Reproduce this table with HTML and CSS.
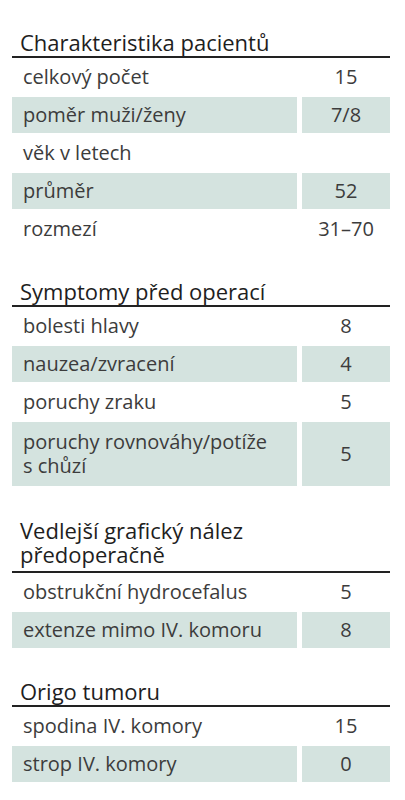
FILE: index.html
```html
<!DOCTYPE html>
<html lang="cs">
<head>
    <meta charset="UTF-8">
    <meta name="viewport" content="width=device-width, initial-scale=1.0">
    <title>Charakteristika pacientů</title>
    <link rel="stylesheet" href="styles.css">
</head>
<body>
    <div class="table">
        <!-- Charakteristika pacientů -->
        <div class="section first">
            <div class="section-title">Charakteristika pacientů</div>
            <div class="row">
                <div class="cell label">celkový počet</div>
                <div class="cell value">15</div>
            </div>
            <div class="row shaded">
                <div class="cell label">poměr muži/ženy</div>
                <div class="cell value">7/8</div>
            </div>
            <div class="row">
                <div class="cell label">věk v letech</div>
                <div class="cell value"></div>
            </div>
            <div class="row shaded">
                <div class="cell label">průměr</div>
                <div class="cell value">52</div>
            </div>
            <div class="row">
                <div class="cell label">rozmezí</div>
                <div class="cell value">31–70</div>
            </div>
        </div>

        <!-- Symptomy -->
        <div class="section">
            <div class="section-title">Symptomy před operací</div>
            <div class="row">
                <div class="cell label">bolesti hlavy</div>
                <div class="cell value">8</div>
            </div>
            <div class="row shaded">
                <div class="cell label">nauzea/zvracení</div>
                <div class="cell value">4</div>
            </div>
            <div class="row">
                <div class="cell label">poruchy zraku</div>
                <div class="cell value">5</div>
            </div>
            <div class="row shaded tall">
                <div class="cell label">poruchy rovnováhy/potíže<br>s chůzí</div>
                <div class="cell value">5</div>
            </div>
        </div>

        <!-- Vedlejší nález -->
        <div class="section">
            <div class="section-title two-line">Vedlejší grafický nález<br>předoperačně</div>
            <div class="row">
                <div class="cell label">obstrukční hydrocefalus</div>
                <div class="cell value">5</div>
            </div>
            <div class="row shaded">
                <div class="cell label">extenze mimo IV. komoru</div>
                <div class="cell value">8</div>
            </div>
        </div>

        <!-- Origo -->
        <div class="section">
            <div class="section-title">Origo tumoru</div>
            <div class="row">
                <div class="cell label">spodina IV. komory</div>
                <div class="cell value">15</div>
            </div>
            <div class="row shaded">
                <div class="cell label">strop IV. komory</div>
                <div class="cell value">0</div>
            </div>
        </div>
    </div>
</body>
</html>
```

FILE: styles.css
```css
body {
    margin: 0;
    background: #fff;
    font-family: "Open Sans", "Noto Sans", sans-serif;
    color: #3c3c3c;
}

.table {
    margin: 0 15px 0 12px;
}

/* Секции */
.section {
    margin-top: 32px;
}

.section.first {
    margin-top: 31px;
}

.section-title {
    font-size: 22px;
    font-weight: 500;
    line-height: 22px;
    color: #1e1e1e;
    padding: 0 8px 3px;
    border-bottom: 2px solid #222;
}

.section-title.two-line {
    line-height: 24px;
    padding-bottom: 5px;
}

/* Строки */
.row {
    display: grid;
    grid-template-columns: 1fr 88px;
    column-gap: 5px;
    font-size: 20px;
    line-height: 22px;
}

.cell {
    padding: 8px 11px;
}

.value {
    text-align: center;
    padding: 8px 0;
}

.shaded {
    margin: 1px 0;
}

.shaded .cell {
    background: #d4e3df;
    padding-top: 7px;
    padding-bottom: 7px;
}

.tall {
    line-height: 24px;
}

.tall .cell {
    padding-top: 8px;
    padding-bottom: 8px;
    display: flex;
    align-items: center;
}

.tall .value {
    justify-content: center;
}
```
